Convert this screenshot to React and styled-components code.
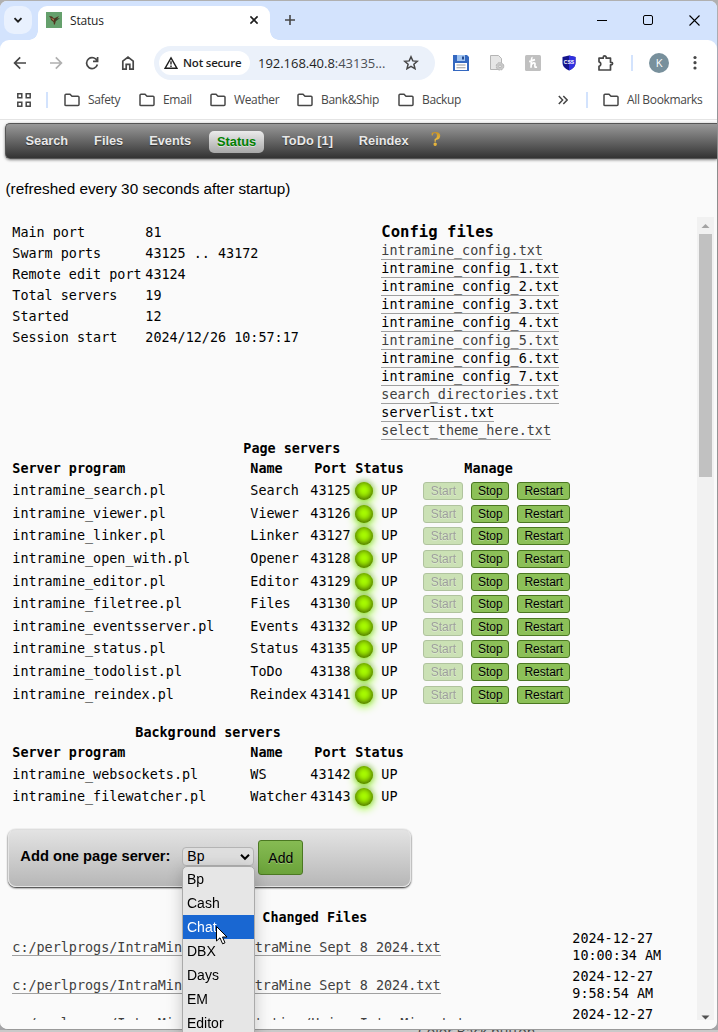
import React from "react";
import styled, { createGlobalStyle, css } from "styled-components";

const mono = `"DejaVu Sans Mono", monospace`;
const sans = `"Liberation Sans", Arial, sans-serif`;
const ui = `"Open Sans", "Noto Sans", sans-serif`;

const Global = createGlobalStyle`
  *, *::before, *::after { box-sizing: border-box; }
  html, body { margin: 0; padding: 0; background: #c6c6c6; overflow: hidden; }
`;

/* ---------- desktop and window ---------- */
const Desktop = styled.div`
  width: 718px;
  height: 1032px;
  overflow: hidden;
  padding: 1px 1px 0 0;
  background: linear-gradient(#b0b0b0, #b0b0b0 2px, #a4a8b4 60px, #8b8b8b 140px, #a5a5a8);
`;

const Window = styled.div`
  width: 717px;
  height: 1029px;
  display: flex;
  flex-direction: column;
  background: #fafafa;
  border-radius: 7px 7px 8px 8px;
  overflow: hidden;
  border-bottom: 1px solid #999;
`;

const Behind = styled.div`
  height: 2px;
  margin-right: -1px;
  background: #c9c9c9;
  padding-left: 418px;
  overflow: hidden;
  font: 14px/14px ${ui};
  color: #444;
`;

const BehindText = styled.div`
  margin-top: -5px;
  white-space: nowrap;
`;

const TitleBar = styled.div`
  height: 39px;
  flex: none;
  background: #d3e3fd;
  display: flex;
  align-items: flex-start;
  padding: 5px 0 0 4px;
`;

const TabSearch = styled.div`
  width: 28px;
  height: 28px;
  border-radius: 10px;
  background: #e9f1fe;
  display: grid;
  place-items: center;
  margin-right: 6px;
`;

const Tab = styled.div`
  position: relative;
  width: 232px;
  height: 34px;
  background: #fff;
  border-radius: 9px 9px 0 0;
  display: flex;
  align-items: flex-start;
  padding: 6px 10px 0 8px;
  font: 12px/17px ${ui};
  letter-spacing: -0.2px;
  color: #1f1f1f;
  &::before, &::after {
    content: "";
    position: absolute;
    bottom: 0;
    width: 9px;
    height: 9px;
  }
  &::before { left: -9px; background: radial-gradient(circle at 0 0, transparent 8.5px, #fff 9px); }
  &::after { right: -9px; background: radial-gradient(circle at 100% 0, transparent 8.5px, #fff 9px); }
`;

const TabTitle = styled.span`
  flex: 1;
  padding-left: 8px;
`;

const WindowButtons = styled.div`
  margin-left: auto;
  display: flex;
`;

const Slot = styled.div`
  width: ${(p) => p.$w || 36}px;
  height: ${(p) => p.$h || 36}px;
  flex: none;
  display: grid;
  place-items: center;
`;

const Toolbar = styled.div`
  height: 43px;
  flex: none;
  background: #fff;
  border-radius: 9px 9px 0 0;
  display: flex;
  align-items: center;
  padding: 3px 0 0 2px;
`;

const ChromeBack = styled.div`
  background: #d3e3fd;
  flex: none;
`;

const Omnibox = styled.div`
  width: 281px;
  height: 34px;
  margin: 0 8px;
  border-radius: 17px;
  background: #ebf1fa;
  display: flex;
  align-items: center;
  padding: 0 16px 0 5px;
  font: 13px/20px ${ui};
  letter-spacing: -0.03px;
  color: #1f1f1f;
`;

const SecurityChip = styled.div`
  width: 91px;
  height: 24px;
  border-radius: 12px;
  background: #fff;
  display: flex;
  align-items: center;
  gap: 5px;
  padding-left: 5px;
  margin-right: 8px;
  font: 600 11.5px/18px ${ui};
  letter-spacing: -0.2px;
  white-space: nowrap;
`;

const Url = styled.span`
  flex: 1;
  white-space: nowrap;
  span { color: #4c5056; }
`;

const Avatar = styled.div`
  width: 20px;
  height: 20px;
  border-radius: 50%;
  background: #78909c;
  color: #fff;
  text-align: center;
  font: 11px/20px ${ui};
`;

const ChromeDivider = styled.div`
  width: 2px;
  height: 16px;
  background: #d3e3fd;
`;

const Bookmarks = styled.div`
  height: 37px;
  flex: none;
  background: #fff;
  border-bottom: 1px solid #e4e4e4;
  display: flex;
  align-items: center;
  padding: 0 0 2px 12px;
  font: 12px/16px ${ui};
  letter-spacing: -0.35px;
  color: #474747;
`;

const Bookmark = styled.div`
  width: ${(p) => p.$w}px;
  display: flex;
  align-items: center;
  gap: 8px;
  white-space: nowrap;
`;

/* ---------- page ---------- */
const Page = styled.div`
  flex: 1;
  min-height: 0;
  background: #fafafa;
  padding: 3px 0 0 5px;
  font-family: ${sans};
  color: #000;
`;

const Nav = styled.div`
  height: 36px;
  border: 1px solid #555;
  border-right: 0;
  border-radius: 5px 0 0 5px;
  background: linear-gradient(#999, #666 50%, #333);
  box-shadow: 0 1px 3px rgba(0, 0, 0, 0.5);
  display: flex;
  align-items: center;
  padding-left: 6.6px;
`;

const NavItem = styled.div`
  height: 22px;
  padding: 0 8px;
  margin: 0 ${(p) => p.$gap ?? 5}px 0 4.9px;
  border-radius: 5px;
  font: bold 12.8px/21px ${sans};
  white-space: nowrap;
  color: #e8e8e8;
  text-shadow: 0 1px 1px rgba(0, 0, 0, 0.5);
  ${(p) =>
    p.$active &&
    css`
      color: #018001;
      background: linear-gradient(#ebebeb, #a8a8a8);
      text-shadow: 0 1px 0 #ddd;
      margin-top: 2px;
    `}
`;

const HelpMark = styled.div`
  font: bold 18px/30px "DejaVu Serif", serif;
  color: transparent;
  background: linear-gradient(#a86b08, #f3c548 55%, #a66c0b);
  -webkit-background-clip: text;
  background-clip: text;
  margin: -2px 0 0 14px;
`;

const Refreshed = styled.div`
  height: 58px;
  padding: 20px 0 0 0.5px;
  font-size: 15.3px;
  line-height: 20px;
`;

const ScrollRow = styled.div`
  display: flex;
  height: 803px;
`;

const ScrollContent = styled.div`
  width: 692px;
  height: 803px;
  overflow: hidden;
  padding-left: 7.3px;
  font: 13.43px/18px ${mono};
  white-space: pre;
`;

const ScrollTrack = styled.div`
  width: 17px;
  background: #f1f1f1;
  display: flex;
  flex-direction: column;
  align-items: center;
  justify-content: space-between;
`;

const ScrollThumb = styled.div`
  width: 13px;
  height: 243px;
  margin-bottom: auto;
  background: #c1c1c1;
`;

const Summary = styled.div`
  display: grid;
  grid-template-columns: 369px 1fr;
  height: 222px;
`;

const Facts = styled.div`
  display: grid;
  grid-template-columns: 133px 1fr;
  grid-auto-rows: 21px;
  line-height: 21px;
  padding-top: 5px;
`;

const ConfigList = styled.div`
  display: flex;
  flex-direction: column;
  align-items: flex-start;
`;

const ConfigTitle = styled.div`
  height: 25px;
  padding-top: 5px;
  font: bold 15.6px/20px ${mono};
`;

const FileLink = styled.span`
  height: 18px;
  line-height: 17px;
  border-bottom: 1px solid #a0a0a0;
  color: ${(p) => (p.$dim ? "#404040" : "#000")};
`;

const TableTitle = styled.div`
  height: 20px;
  line-height: 20px;
  padding-left: ${(p) => p.$x}px;
  font-weight: bold;
`;

const ServerRow = styled.div`
  display: grid;
  grid-template-columns: 238px 60px 45px 26px 42px 1fr;
  align-items: center;
  height: ${(p) => (p.$head ? 20.8 : 22.64)}px;
  font-weight: ${(p) => (p.$head ? "bold" : "normal")};
`;

const PortHead = styled.span`
  padding-left: 4px;
`;

const ManageHead = styled.span`
  padding-left: 41px;
`;

const Led = styled.span`
  width: 18px;
  height: 18px;
  border-radius: 50%;
  background: #abff00;
  box-shadow: rgba(0, 0, 0, 0.2) 0 -1px 5px 1px, inset #304701 0 -1px 7px, #89ff00 0 2px 10px;
`;

const Buttons = styled.div`
  display: flex;
  gap: 8px;
`;

const ManageButton = styled.button`
  width: ${(p) => p.$w}px;
  height: 18px;
  padding: 0;
  border: 1px solid #4b7822;
  border-radius: 3px;
  background: #8cc058;
  color: #000;
  font: 12px/16px ${sans};
  text-shadow: 0 1px 0 rgba(255, 255, 255, 0.3);
  &:disabled { opacity: 0.42; color: #1c1c1c; }
`;

const AddPanel = styled.div`
  width: 403px;
  height: 58px;
  margin: 20px 0 0 -4px;
  display: flex;
  align-items: center;
  padding: 0 0 0 11px;
  border-radius: 8px;
  border: 1px solid #e4e4e4;
  border-top-color: #ddd;
  background: linear-gradient(#e3e3e3, #b7b7b7);
  box-shadow: 0 1px 2px #222;
  font-family: ${sans};
`;

const AddLabel = styled.div`
  width: 162px;
  font: bold 14.7px/20px ${sans};
  margin-top: -3px;
`;

const Select = styled.div`
  width: 72px;
  height: 19px;
  margin-top: -2px;
  border: 1px solid #b4b4b4;
  border-radius: 4px;
  background: #dedede;
  display: flex;
  align-items: center;
  justify-content: space-between;
  padding: 0 3px 0 4px;
  font: 14px/17px ${sans};
`;

const Menu = styled.div`
  position: fixed;
  left: 182px;
  top: 866px;
  width: 73px;
  height: 180px;
  border: 1px solid #aaa;
  border-radius: 5px 5px 0 0;
  background: #e6e6e6;
  box-shadow: 0 3px 16px rgba(0, 0, 0, 0.22);
  z-index: 2;
`;

const Option = styled.div`
  height: 24px;
  padding-left: 4px;
  font: 14px/24px ${sans};
  background: ${(p) => (p.$on ? "#1967d2" : "transparent")};
  color: ${(p) => (p.$on ? "#fff" : "#000")};
`;

const Pointer = styled.svg`
  position: fixed;
  left: 215px;
  top: 925px;
  z-index: 3;
`;

const AddButton = styled.button`
  width: 45px;
  height: 35px;
  margin-left: 4px;
  padding: 0;
  border: 1px solid #4b7822;
  border-radius: 3px;
  background: linear-gradient(#86bb53, #6ba33a);
  font: 14px/20px ${sans};
  color: #000;
  text-shadow: 0 1px 0 rgba(255, 255, 255, 0.3);
`;

const ChangedTitle = styled.div`
  height: 41.6px;
  padding: 22.6px 0 0 250px;
  font-weight: bold;
`;

const ChangedRow = styled.div`
  height: 38px;
  display: grid;
  grid-template-columns: 560px 1fr;
  align-items: center;
  line-height: 17px;
`;

/* ---------- icons ---------- */
const Svg = ({ w = 16, h = w, children, ...rest }) => (
  <svg width={w} height={h} viewBox={`0 0 ${w} ${h}`} fill="none" stroke="#474747" strokeWidth="1.7" {...rest}>
    {children}
  </svg>
);

const Folder = () => (
  <Svg w={16} h={14} strokeWidth="1.5">
    <path d="M1 12V2.2Q1 1.2 2 1.2H6L8 3.2H14Q15 3.2 15 4.2V11.6Q15 12.6 14 12.6H2Q1 12.6 1 12Z" />
  </Svg>
);

const Bird = () => (
  <Svg w={16} stroke="none">
    <rect width="16" height="16" fill="#65a06c" />
    <path d="M3 4L6 4.5L8 6.5L13 4L10 8.5L9 12L8 13L7.5 10L5 8L4.5 6Z" fill="#51341f" />
    <path d="M5 6L8 7L7.5 9Z" fill="#b17c55" />
    <path d="M9 7L14 6L10 9Z" fill="#35452e" />
  </Svg>
);

const config = [
  ["intramine_config.txt", 1],
  ["intramine_config_1.txt", 0],
  ["intramine_config_2.txt", 0],
  ["intramine_config_3.txt", 0],
  ["intramine_config_4.txt", 0],
  ["intramine_config_5.txt", 1],
  ["intramine_config_6.txt", 0],
  ["intramine_config_7.txt", 0],
  ["search_directories.txt", 1],
  ["serverlist.txt", 0],
  ["select_theme_here.txt", 1],
];

const facts = [
  ["Main port", "81"],
  ["Swarm ports", "43125 .. 43172"],
  ["Remote edit port", "43124"],
  ["Total servers", "19"],
  ["Started", "12"],
  ["Session start", "2024/12/26 10:57:17"],
];

const pageServers = [
  ["intramine_search.pl", "Search", 43125],
  ["intramine_viewer.pl", "Viewer", 43126],
  ["intramine_linker.pl", "Linker", 43127],
  ["intramine_open_with.pl", "Opener", 43128],
  ["intramine_editor.pl", "Editor", 43129],
  ["intramine_filetree.pl", "Files", 43130],
  ["intramine_eventsserver.pl", "Events", 43132],
  ["intramine_status.pl", "Status", 43135],
  ["intramine_todolist.pl", "ToDo", 43138],
  ["intramine_reindex.pl", "Reindex", 43141],
];

const backgroundServers = [
  ["intramine_websockets.pl", "WS", 43142],
  ["intramine_filewatcher.pl", "Watcher", 43143],
];

const changed = [
  ["c:/perlprogs/IntraMine/docs/IntraMine Sept 8 2024.txt", "2024-12-27\n10:00:34 AM"],
  ["c:/perlprogs/IntraMine/docs/IntraMine Sept 8 2024.txt", "2024-12-27\n9:58:54 AM"],
  ["c:/perlprogs/IntraMine/Documentation/Using IntraMine.txt", "2024-12-27\n9:51:20 AM"],
];

const bookmarks = [["Safety", 75], ["Email", 71], ["Weather", 87], ["Bank&Ship", 101], ["Backup", 151]];

function Servers({ title, x, rows, manage }) {
  return (
    <>
      <TableTitle $x={x}>{title}</TableTitle>
      <ServerRow $head>
        <span>Server program</span>
        <span>Name</span>
        <PortHead>Port</PortHead>
        <span>Status</span>
        <span />
        {manage && <ManageHead>Manage</ManageHead>}
      </ServerRow>
      {rows.map(([program, name, port]) => (
        <ServerRow key={port}>
          <span>{program}</span>
          <span>{name}</span>
          <span>{port}</span>
          <Led />
          <span>UP</span>
          {manage && (
            <Buttons>
              <ManageButton $w={40} disabled>Start</ManageButton>
              <ManageButton $w={38}>Stop</ManageButton>
              <ManageButton $w={53}>Restart</ManageButton>
            </Buttons>
          )}
        </ServerRow>
      ))}
    </>
  );
}

function BrowserChrome() {
  return (
    <>
      <TitleBar>
        <TabSearch>
          <Svg w={10} stroke="#1f1f1f" strokeWidth="1.9"><path d="M1.5 3.2L5 6.7L8.5 3.2" /></Svg>
        </TabSearch>
        <Tab>
          <Bird />
          <TabTitle>Status</TabTitle>
          <Svg w={12} h={16} stroke="#1f1f1f" strokeWidth="1.6"><path d="M2.4 4.4L9.6 11.6M9.6 4.4L2.4 11.6" /></Svg>
        </Tab>
        <Slot $w={40} $h={28}>
          <Svg w={12} strokeWidth="1.6"><path d="M6 1V11M1 6H11" /></Svg>
        </Slot>
        <WindowButtons>
          <Slot $w={46} $h={28}><Svg w={10} stroke="#000" strokeWidth="1"><path d="M0 5.5H10" /></Svg></Slot>
          <Slot $w={46} $h={28}><Svg w={10} stroke="#000" strokeWidth="1"><rect x=".5" y=".5" width="9" height="9" rx="1.5" /></Svg></Slot>
          <Slot $w={46} $h={28}><Svg w={11} stroke="#000" strokeWidth="1.1"><path d="M.5 .5L10.5 10.5M10.5 .5L.5 10.5" /></Svg></Slot>
        </WindowButtons>
      </TitleBar>
      <ChromeBack>
        <Toolbar>
          <Slot><Svg w={14}><path d="M13 7H2M7.2 1.4L1.6 7L7.2 12.6" /></Svg></Slot>
          <Slot><Svg w={14} stroke="#b0b0b0"><path d="M1 7H12M6.8 1.4L12.4 7L6.8 12.6" /></Svg></Slot>
          <Slot><Svg w={14}><path d="M12.2 5A5.5 5.5 0 1 0 12.4 8.5M12.6 1V5.4H8" /></Svg></Slot>
          <Slot><Svg w={14} h={16}><path d="M1.8 6.2L7 2L12.2 6.2V14.2H8.8V9.4H5.2V14.2H1.8Z" /></Svg></Slot>
          <Omnibox>
            <SecurityChip>
              <Svg w={14} stroke="#1f1f1f" strokeWidth="1.4"><path d="M7 1.8L13 12.3H1ZM7 5.3V8.6M7 9.6V11" /></Svg>
              Not secure
            </SecurityChip>
            <Url>192.168.40.8<span>:43135...</span></Url>
            <Svg w={16} strokeWidth="1.5"><path d="M8 1.8L9.8 5.9L14.3 6.3L10.9 9.3L12 13.8L8 11.4L4 13.8L5.1 9.3L1.7 6.3L6.2 5.9Z" /></Svg>
          </Omnibox>
          <Slot>
            <Svg w={16} stroke="none">
              <path d="M0 0H14L16 2V16H0Z" fill="#3468c0" />
              <path d="M4 0H12V6H4Z" fill="#9fc3f0" /><path d="M9 1.5H11V4.5H9Z" fill="#24488c" />
              <path d="M2 8H14V15H2Z" fill="#fff" /><path d="M3.5 9.5H12.5V10.5H3.5ZM3.5 12.2H12.5V13.2H3.5Z" fill="#999" />
            </Svg>
          </Slot>
          <Slot>
            <Svg w={16} stroke="#b5b5b5" strokeWidth="1">
              <path d="M1.5 .5H9.5L12.5 3.5V14.5H1.5Z" fill="#e6e6e6" />
              <circle cx="11" cy="11.3" r="3.8" fill="#c9c9c9" strokeDasharray="2 1" /><circle cx="11" cy="11.3" r="1.3" fill="#f3f3f3" />
            </Svg>
          </Slot>
          <Slot>
            <Svg w={16} stroke="#fff" strokeWidth="1.7">
              <rect width="16" height="16" rx="1.5" fill="#c0c0c0" stroke="none" />
              <path d="M7.6 2.5C5.8 2.5 6.6 6 6 12.8M4.2 6.6L10 4.6M6.2 9.8C7.6 7.4 10.3 7.2 10 9.2C9.8 11.2 9.4 12.8 12 12" />
            </Svg>
          </Slot>
          <Slot>
            <svg width="14" height="16" viewBox="0 0 14 16">
              <path d="M7 .5L13.5 2V8Q13.5 13 7 15.5Q.5 13 .5 8V2Z" fill="#15158c" />
              <path d="M7 .5L13.5 2V8Q13.5 13 7 15.5Z" fill="#3131e0" />
              <text x="7" y="9.3" textAnchor="middle" fontFamily="Liberation Sans, sans-serif" fontWeight="bold" fontSize="5" fill="#fff">CSS</text>
            </svg>
          </Slot>
          <Slot>
            <Svg w={18}><path d="M3 4.2H7.2V3.4A1.5 1.5 0 0 1 10.2 3.4V4.2H14.5V8.3H15.3A1.3 1.3 0 0 1 15.3 10.9H14.5V16H3V12.3A2.3 2.3 0 0 0 3 7.8Z" strokeLinejoin="round" /></Svg>
          </Slot>
          <Slot $w={18}><ChromeDivider /></Slot>
          <Slot><Avatar>K</Avatar></Slot>
          <Slot>
            <Svg w={4} h={16} fill="#474747" stroke="none"><circle cx="2" cy="2.5" r="1.6" /><circle cx="2" cy="7.7" r="1.6" /><circle cx="2" cy="13" r="1.6" /></Svg>
          </Slot>
        </Toolbar>
      </ChromeBack>
      <Bookmarks>
        <Slot $w={24}>
          <Svg w={14} strokeWidth="1.5"><path d="M.8 .8H4.8V4.8H.8ZM9.2 .8H13.2V4.8H9.2ZM.8 9.2H4.8V13.2H.8ZM9.2 9.2H13.2V13.2H9.2Z" /></Svg>
        </Slot>
        <Slot $w={22}><ChromeDivider /></Slot>
        <Slot $w={6} />
        {bookmarks.map(([name, w]) => (
          <Bookmark key={name} $w={w}><Folder />{name}</Bookmark>
        ))}
        <Slot $w={28}><Svg w={10} strokeWidth="1.5"><path d="M.8 1L4.6 5L.8 9M5.3 1L9.1 5L5.3 9" /></Svg></Slot>
        <Slot $w={19}><ChromeDivider /></Slot>
        <Slot $w={7} />
        <Bookmark $w={110}><Folder />All Bookmarks</Bookmark>
      </Bookmarks>
    </>
  );
}

export default function App() {
  return (
    <Desktop>
      <Global />
      <Window>
        <BrowserChrome />
        <Page>
          <Nav>
            <NavItem>Search</NavItem>
            <NavItem>Files</NavItem>
            <NavItem>Events</NavItem>
            <NavItem $active>Status</NavItem>
            <NavItem>ToDo [1]</NavItem>
            <NavItem $gap={0}>Reindex</NavItem>
            <HelpMark>?</HelpMark>
          </Nav>
          <Refreshed>(refreshed every 30 seconds after startup)</Refreshed>
          <ScrollRow>
            <ScrollContent>
              <Summary>
                <Facts>
                  {facts.map(([label, value]) => (
                    <React.Fragment key={label}><span>{label}</span><span>{value}</span></React.Fragment>
                  ))}
                </Facts>
                <ConfigList>
                  <ConfigTitle>Config files</ConfigTitle>
                  {config.map(([name, dim]) => <FileLink key={name} $dim={dim}>{name}</FileLink>)}
                </ConfigList>
              </Summary>
              <Servers title="Page servers" x={231} rows={pageServers} manage />
              <Slot $w={10} $h={16.5} />
              <Servers title="Background servers" x={123} rows={backgroundServers} />
              <AddPanel>
                <AddLabel>Add one page server:</AddLabel>
                <Select>
                  Bp
                  <Svg w={10} h={8} stroke="#000" strokeWidth="2"><path d="M1 1.8L5 5.8L9 1.8" /></Svg>
                </Select>
                <AddButton>Add</AddButton>
              </AddPanel>
              <ChangedTitle>Changed Files</ChangedTitle>
              {changed.map(([name, date]) => (
                <ChangedRow key={date}>
                  <div><FileLink $dim>{name}</FileLink></div>
                  <span>{date}</span>
                </ChangedRow>
              ))}
            </ScrollContent>
            <ScrollTrack>
              <Svg w={9} h={17} stroke="none" fill="#a3a3a3"><path d="M.5 11L4.5 7L8.5 11Z" /></Svg>
              <ScrollThumb />
              <Svg w={9} h={5} stroke="none" fill="#505050"><path d="M.5 .5L4.5 4.5L8.5 .5Z" /></Svg>
            </ScrollTrack>
          </ScrollRow>
        </Page>
      </Window>
      <Behind><BehindText>Color Back button</BehindText></Behind>
      <Menu>
        {["Bp", "Cash", "Chat", "DBX", "Days", "EM", "Editor"].map((name) => (
          <Option key={name} $on={name === "Chat"}>{name}</Option>
        ))}
      </Menu>
      <Pointer width="14" height="21" viewBox="0 0 14 21" fill="#fff" stroke="#000">
        <path d="M1.5 1.5V16L5 12.8L7.6 18.8L10 17.8L7.5 12H12Z" />
      </Pointer>
    </Desktop>
  );
}
